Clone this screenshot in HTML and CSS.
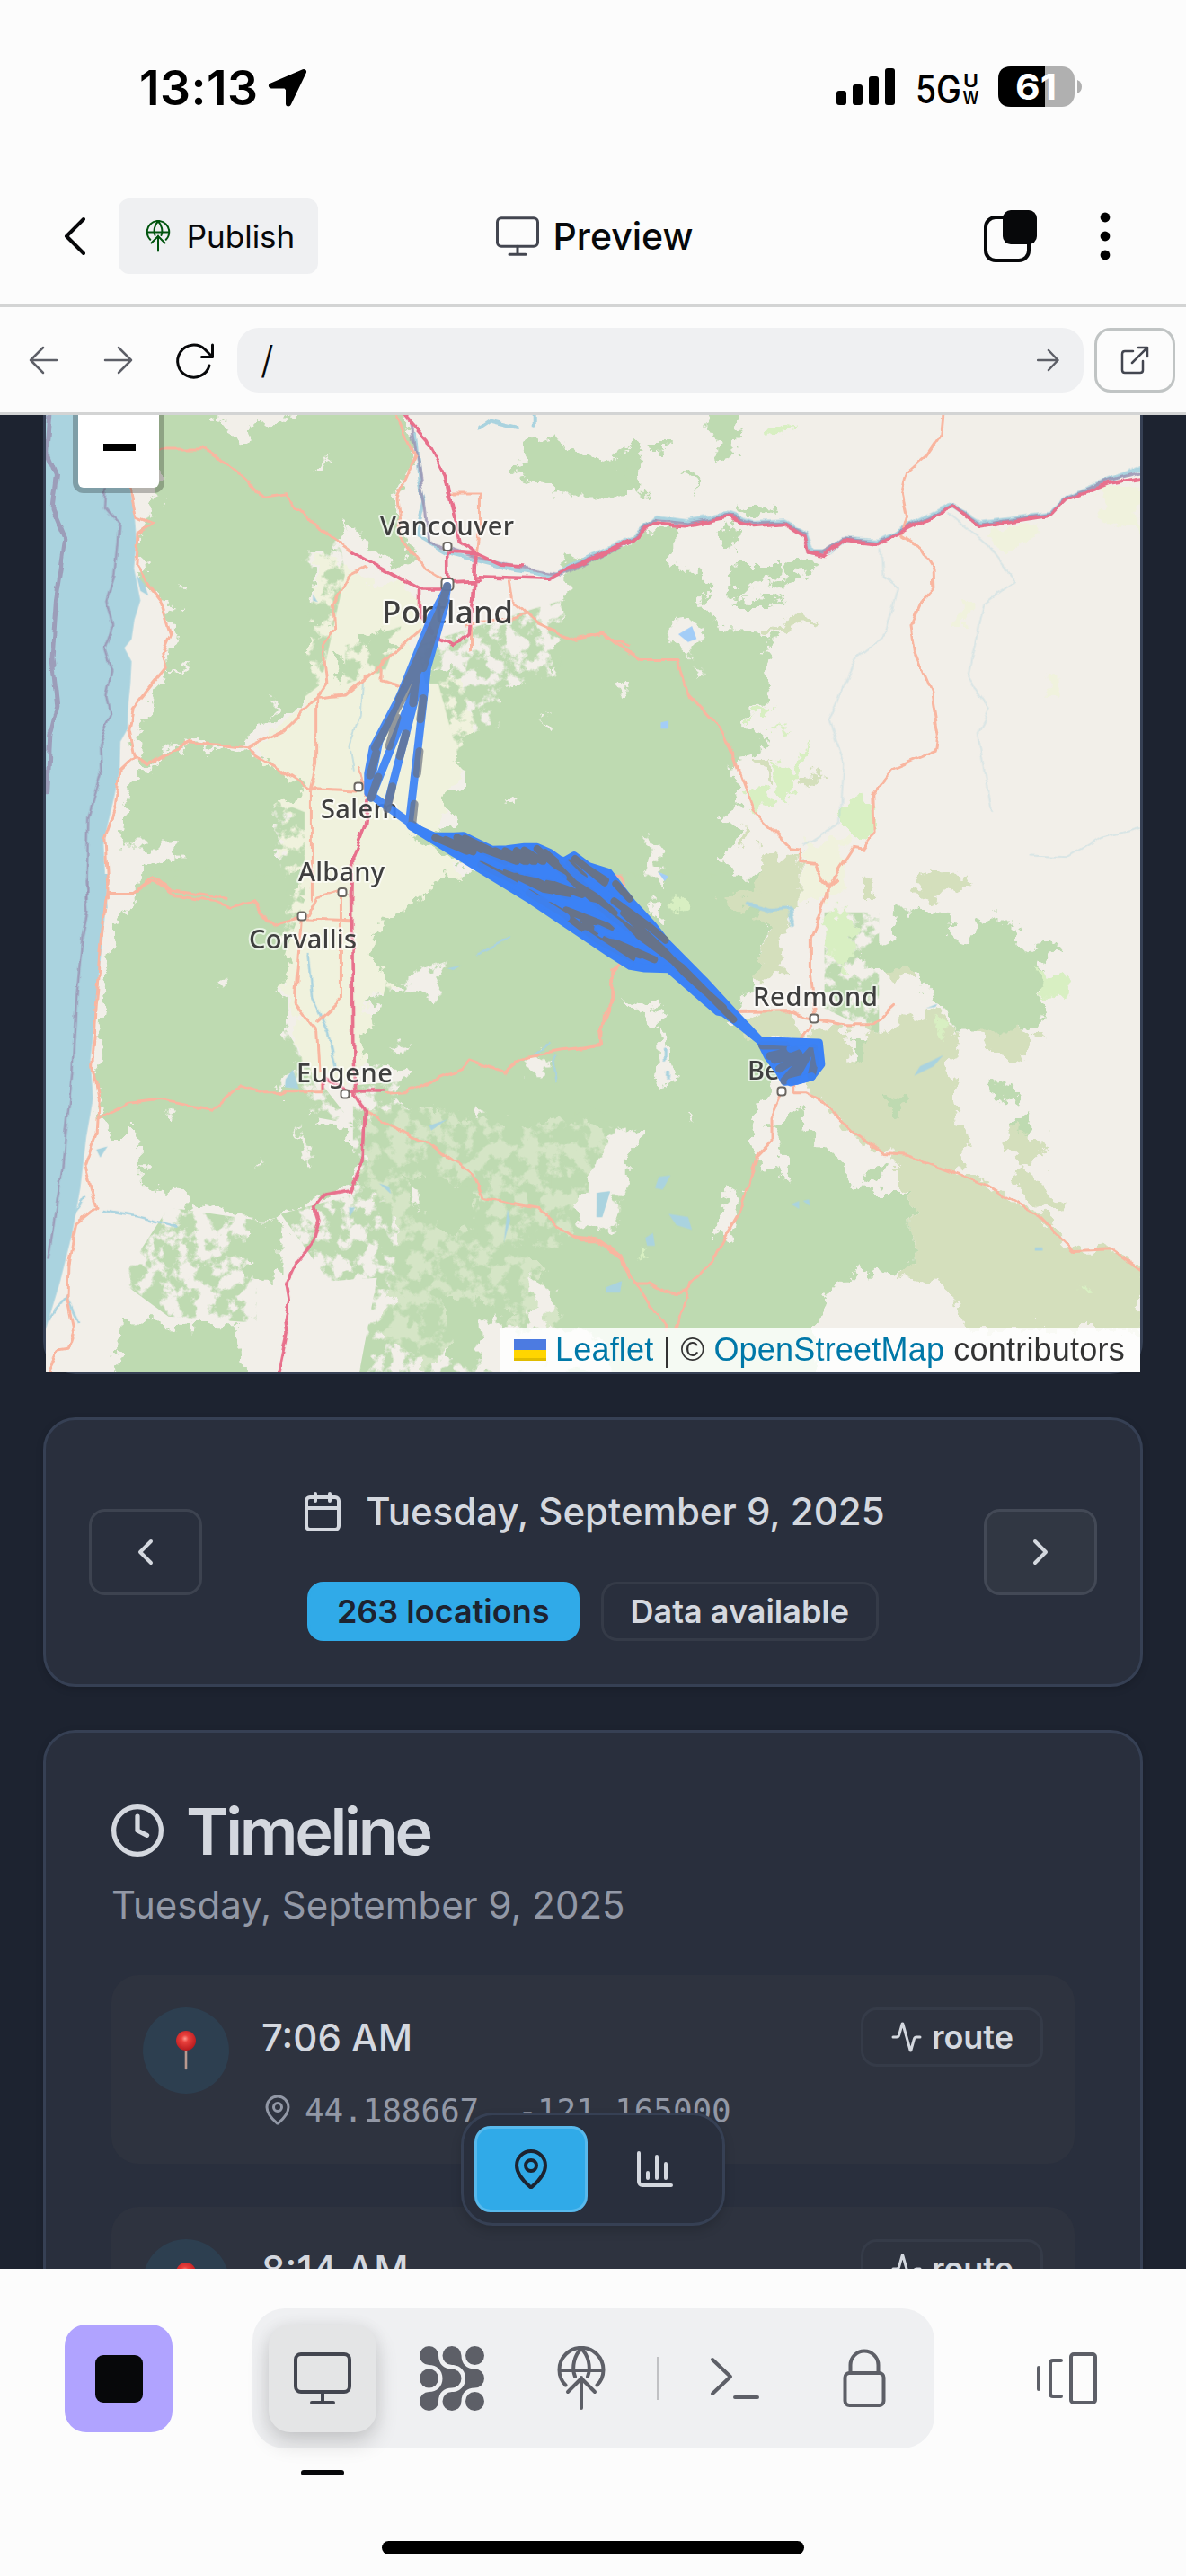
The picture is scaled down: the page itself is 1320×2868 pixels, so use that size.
FILE: index.html
```html
<!DOCTYPE html>
<html lang="en">
<head>
<meta charset="utf-8">
<title>Preview</title>
<link rel="stylesheet" href="styles.css">
</head>
<body>
<svg class="defs" width="0" height="0" aria-hidden="true">
  <symbol id="publish-globe" viewBox="0 0 72 72">
    <path d="M18.500 43.500A24.500 24.500 0 1 1 53.500 43.500M11.500 27H60.500M29 34C25 24 28 10 36 3C44 10 47 24 43 34"/>
    <path d="M36 69V35M21 51L36 36L51 51"/>
  </symbol>
  <symbol id="monitor" viewBox="0 0 72 72">
    <rect x="6" y="9" width="60" height="42" rx="6"/>
    <path d="M36 51V62M24 63H48"/>
  </symbol>
  <symbol id="map-pin" viewBox="0 0 24 24">
    <path d="M20 10c0 4.993-5.539 10.193-7.399 11.799a1 1 0 0 1-1.202 0C9.539 20.193 4 14.993 4 10a8 8 0 0 1 16 0"/>
    <circle cx="12" cy="10" r="3"/>
  </symbol>
  <symbol id="activity" viewBox="0 0 24 24">
    <path d="M22 12h-2.480a2 2 0 0 0-1.930 1.460l-2.350 8.360a.25.25 0 0 1-.48 0L9.240 2.180a.25.25 0 0 0-.48 0l-2.350 8.360A2 2 0 0 1 4.490 12H2"/>
  </symbol>
  <radialGradient id="pin-ball" cx=".45" cy=".4" r=".6">
    <stop offset="0" stop-color="#ff9a90"/><stop offset=".3" stop-color="#e9403c"/><stop offset="1" stop-color="#b81a1e"/>
  </radialGradient>
  <symbol id="pushpin" viewBox="0 0 48 48">
    <path d="M24 23V44" stroke="#b99a90" stroke-width="2.600" stroke-linecap="round"/>
    <circle cx="24" cy="13" r="11" fill="url(#pin-ball)"/>
  </symbol>
</svg>

<div class="status-bar">
  <div class="clock">
    <span>13:13</span>
    <svg width="44" height="44" viewBox="0 0 44 44"><path d="M40 4L4 19.500H20L23 23V39.500Z" stroke="#000" stroke-width="6" stroke-linejoin="round"/></svg>
  </div>
  <svg class="status-icons" width="280" height="50" viewBox="928 71 280 50">
    <rect x="931" y="101" width="11" height="16" rx="3"/><rect x="949" y="94" width="11" height="23" rx="3"/><rect x="967" y="85" width="11" height="32" rx="3"/><rect x="985" y="76" width="11" height="41" rx="3"/>
    <text x="1019" y="115" font-size="44" font-weight="500" textLength="51" lengthAdjust="spacingAndGlyphs">5G</text>
    <text x="1072" y="97" font-size="20" font-weight="600" textLength="17" lengthAdjust="spacingAndGlyphs">U</text>
    <text x="1071.500" y="116" font-size="20" font-weight="600" textLength="18" lengthAdjust="spacingAndGlyphs">W</text>
    <rect x="1111" y="74" width="85" height="45" rx="14" fill="#b0b0b0"/>
    <path d="M1163 74H1125Q1111 74 1111 88V105Q1111 119 1125 119H1163Z"/>
    <path d="M1199 89Q1204 91 1204 96.500Q1204 102 1199 104Z" fill="#b0b0b0"/>
    <text x="1130" y="111" font-size="40" font-weight="700" fill="#fff" textLength="46" lengthAdjust="spacingAndGlyphs">61</text>
  </svg>
</div>

<header class="top-bar">
  <div class="top-left">
    <svg class="line back" width="28" height="46" viewBox="0 0 28 46"><path d="M23 4L4 23L23 42"/></svg>
    <button class="publish"><svg class="line" width="36" height="36"><use href="#publish-globe"/></svg><span>Publish</span></button>
  </div>
  <div class="top-title"><svg class="line" width="54" height="54"><use href="#monitor"/></svg><span>Preview</span></div>
  <div class="top-right">
    <svg width="62" height="62" viewBox="0 0 62 62"><rect x="4" y="10" width="48" height="48" rx="11" fill="none" stroke="#07080a" stroke-width="4"/><rect x="23" y="2" width="38" height="38" rx="9" fill="#07080a"/></svg>
    <svg width="12" height="56" viewBox="0 0 12 56"><circle cx="6" cy="7" r="5.400"/><circle cx="6" cy="28" r="5.400"/><circle cx="6" cy="49" r="5.400"/></svg>
  </div>
</header>

<nav class="address-bar">
  <svg class="line muted" width="34" height="34" viewBox="0 0 34 34"><path d="M32 17H3M17 3L3 17L17 31"/></svg>
  <svg class="line muted" width="34" height="34" viewBox="0 0 34 34"><path d="M2 17H31M17 3L31 17L17 31"/></svg>
  <svg class="line reload" width="46" height="46" viewBox="0 0 46 46"><path d="M39 29A18 18 0 1 1 34 11L42 19M42.500 6V19.500H30.500"/></svg>
  <div class="url"><span>/</span><svg class="line muted" width="26" height="26" viewBox="0 0 26 26"><path d="M1 13H23M13 2L23.500 13L13 24"/></svg></div>
  <button class="external"><svg class="line" width="34" height="34" viewBox="0 0 34 34"><path d="M15 7H6Q3 7 3 10V28Q3 31 6 31H23Q26 31 26 28V18M14 20L31 3M21 3H31V13"/></svg></button>
</nav>

<main class="app">
  <section class="map">
    <svg width="1218" height="1065" viewBox="51 462 1218 1065">
      <defs>
        <filter id="ragged" x="-5%" y="-5%" width="110%" height="110%">
          <feTurbulence type="fractalNoise" baseFrequency=".05" numOctaves="5" seed="7"/>
          <feDisplacementMap in="SourceGraphic" scale="34" xChannelSelector="R" yChannelSelector="G"/>
        </filter>
        <filter id="speckle" x="-5%" y="-5%" width="110%" height="110%">
          <feTurbulence type="fractalNoise" baseFrequency=".055" numOctaves="6" seed="4"/>
          <feColorMatrix values="0 0 0 0 0  0 0 0 0 0  0 0 0 0 0  8 0 0 0 -3.4" result="m"/>
          <feComposite in="SourceGraphic" in2="m" operator="in"/>
          <feGaussianBlur stdDeviation=".7"/>
        </filter>
        <filter id="wiggle" x="-5%" y="-5%" width="110%" height="110%">
          <feTurbulence type="fractalNoise" baseFrequency=".05" numOctaves="2" seed="12"/>
          <feDisplacementMap in="SourceGraphic" scale="9" xChannelSelector="R" yChannelSelector="G"/>
        </filter>
      </defs>
      <rect x="51" y="462" width="1218" height="1065" fill="#f2efe9"/>

      <!-- farmland -->
      <g filter="url(#ragged)" fill="#f0f2dd">
        <g transform="translate(0 440) scale(.4464 .3571)">
          <path d="M790 480L900 560L1060 640L1020 800L1150 900L1200 1060L1110 1230L1100 1330L1180 1568H720L700 1280L640 1090L760 960Z"/>
        </g>
        <g transform="translate(0 980) scale(.4464 .3571)">
          <path d="M700 0H1120L960 160L990 330L900 370L930 440L900 620H740L740 400L690 300Z"/>
        </g>
        <g transform="translate(640 440) scale(.4337 .3571)">
          <path d="M590 1390L700 1380L680 1568H580ZM1350 290L1450 280V430L1350 400ZM1060 430L1180 410L1190 440L1100 500ZM1000 630L1030 630L1010 720H970ZM1215 880H1240L1235 940H1210Z"/>
        </g>
      </g>

      <!-- open woodland -->
      <g filter="url(#ragged)" fill="#d5e5c6">
        <g transform="translate(0 980) scale(.4464 .3571)">
          <path d="M920 700L1600 720V1400H1160L1060 1532L960 1400L1000 1080L900 940Z"/>
        </g>
        <path d="M640 1180L700 1210L690 1400L640 1420Z"/>
      </g>

      <!-- forest -->
      <g filter="url(#speckle)" fill="#bedab1">
        <g transform="translate(0 980) scale(.4464 .3571)">
          <path d="M880 640L1640 560V1640H880L940 1240L820 1250L700 1040L880 980ZM420 1020L640 1060L640 1380L420 1360L300 1250ZM760 60L680 -20V400L780 600L880 760L700 720L660 400Z"/>
          <path d="M980 200L1100 100V500L920 600Z"/>
        </g>
        <g transform="translate(0 440) scale(.4464 .3571)">
          <path d="M740 400L840 380L860 560L800 900L740 960ZM1080 840L1440 660V1120H1140ZM640 1240L760 1300V1560H640ZM1040 780L1240 700L1400 640V900H1060ZM860 780L1000 720L960 860L860 900Z"/>
        </g>
        <g transform="translate(640 980) scale(.4337 .3571)"><path d="M-60 560L200 660L160 1100L240 1400L-60 1400ZM640 100H780V480L640 400Z"/></g>
      </g>
      <g filter="url(#ragged)" fill="#bedab1">
        <g transform="translate(0 440) scale(.4464 .3571)">
          <path d="M340 20H530L560 110L600 140L620 100L700 80L760 20H1000L1035 200L985 310L1010 440L1040 520L980 540L900 440L860 400L840 480L760 470L780 600L760 660L800 720L770 800L790 900L730 980L610 1060L620 1090L480 1080L360 1150L340 1060L420 860L430 740L400 640L350 560L345 440L400 330Z"/>
          <path d="M360 1160L480 1095L620 1110L760 1225L720 1250L670 1300L700 1370L700 1450L740 1540L700 1600H340L350 1480L440 1450V1396H300L310 1310L330 1210Z"/>
          <path d="M1325 130L1400 150L1500 220L1600 180V312H1372L1370 265L1290 250Z"/>
          <path d="M1600 500L1460 570L1430 680L1380 770L1390 860L1330 880L1240 940L1230 1050L1130 1060L1160 1200L1090 1260L1130 1340L1030 1380L1200 1480L1260 1600H1600Z"/>
          <path d="M900 760L960 730L1000 790L930 830ZM830 820L900 850L840 890ZM1060 840L1130 850L1100 900Z"/>
        </g>
        <g transform="translate(640 440) scale(.4337 .3571)">
          <path d="M-20 515L150 460L180 415H252V540H330V640L370 730L510 740L500 820L475 870L500 940L440 1000L485 1060L460 1140L400 1150L430 1270L370 1300L420 1370L370 1440L430 1600H-20Z"/>
          <path d="M405 535H535L520 560L440 600L395 655H490L540 630L400 620ZM340 20H420L410 190L370 205L365 140L340 130ZM-20 180L70 225L130 165L175 190L130 240L140 310H-20ZM270 250L310 260L325 300ZM190 140H230V165H200ZM370 430L410 400L420 480L380 470ZM420 340L500 350L480 385ZM580 510L640 530L590 570L500 590Z"/>
        </g>
        <g transform="translate(0 980) scale(.4464 .3571)">
          <path d="M300 110L380 -20H740L710 100L700 220L730 260L690 340L725 400L710 470L730 560L690 640L790 720L880 800L890 940L800 980L700 1060L610 1050L460 1015V985L440 960H358V840H330V795H280L250 740L242 600L250 400L265 270Z"/>
          <path d="M1110 -20H1620V800L1400 740L1230 760L980 680L1020 600L900 560L900 490L960 400L900 370L1010 340L920 250L930 170Z"/>
          <path d="M296 1365L480 1390L600 1390L610 1600H285ZM608 1060H700V1240H620Z"/>
          <path d="M1100 1300L1280 1340L1220 1500L1120 1480ZM1000 900L1180 960L1200 1120L1040 1060ZM1300 1100L1430 1160L1480 1340L1400 1360Z"/>
        </g>
        <g transform="translate(640 980) scale(.4337 .3571)">
          <path d="M-20 -20H500L470 330L400 420L490 500L520 620L480 720L540 710L620 760L680 880L760 980H860L870 1200L810 1225L720 1210L640 1300L615 1400V1600H-20V1100L100 1050L140 800L40 700L-20 740Z"/>
          <path d="M1120 750L1170 740L1160 790L1120 800ZM1060 620L1140 650L1130 690L1060 650ZM1120 1370H1190L1170 1400H1120Z"/>
        </g>
      </g>

      <!-- clearings -->
      <g filter="url(#ragged)" fill="#f2efe9">
        <g transform="translate(0 440) scale(.4464 .3571)">
          <path d="M770 230L820 200L800 250ZM400 630L455 660L420 690ZM430 845L480 850L440 860ZM680 940L690 960L680 1010ZM860 390L890 400L890 440ZM1270 1240L1300 1250L1280 1275ZM1540 900L1568 890V930ZM1350 1005L1370 1020L1365 1045ZM460 570L472 575L465 590Z"/>
        </g>
        <g transform="translate(640 440) scale(.4337 .3571)">
          <path d="M240 700L300 690L330 740L290 810L240 770ZM290 820L330 880L310 890ZM100 910L140 900L145 930ZM175 1370L210 1400L230 1540H210ZM450 600L530 580L480 620Z"/>
        </g>
        <g transform="translate(0 980) scale(.4464 .3571)">
          <path d="M1010 300L1110 270L1080 370L1020 350ZM1310 570L1370 540L1360 615L1310 610ZM1520 800L1568 780V950L1530 1000L1540 1110L1440 1080L1480 900ZM740 760L790 880L760 880ZM540 300L570 300L550 350ZM970 520L1030 510L1000 560ZM1190 1380L1240 1350L1250 1400L1440 1400L1520 1450V1532H1200ZM1330 1240L1380 1270L1360 1400L1320 1390ZM640 860L650 890L635 900ZM420 730L430 750L420 760ZM1030 960L1060 980L1030 1040ZM1180 700L1210 720L1190 750Z"/>
        </g>
        <g transform="translate(640 980) scale(.4337 .3571)">
          <path d="M110 370L240 400L200 450L240 500L260 620L220 650L210 470ZM120 790L180 770L150 830L90 1000L20 1080L0 980L60 900ZM470 700L530 600L560 700L510 760L550 940L470 880L450 820ZM390 970L430 960L400 1110H360ZM585 730L640 720L720 830L830 870V970L760 960L680 880L600 780ZM190 70L220 80L210 140L190 120ZM290 720L310 730L300 750Z"/>
        </g>
      </g>

      <!-- scrub and grass -->
      <g filter="url(#ragged)">
        <g transform="translate(640 980) scale(.4337 .3571)" fill="#d4dfbc">
          <path d="M480 -20H570L560 60L530 200L540 300H470L490 160L440 60ZM420 430L560 410L590 480L500 500L430 480Z"/>
          <path d="M600 480L690 450L700 560L760 470L830 450L930 400L980 480L960 600L980 720L1000 840L990 910L1050 950L1190 1040L1280 1150H1380L1450 1210V1400H990L980 1330L920 1260L820 1240L870 1190L860 980L830 970V870L720 820L640 700L590 630Z"/>
          <path d="M900 -20H1010L940 70L860 20ZM1020 480L1190 470L1180 530L1130 570ZM1130 780L1215 800L1190 870L1130 880L1200 930V970L1255 1010V1050L1190 1020L1120 940L1140 890L1090 830ZM780 240L860 230V320L800 300ZM960 1300L1020 1300L1010 1360Z"/>
        </g>
        <g transform="translate(640 440) scale(.4337 .3571)" fill="#d4dfbc">
          <path d="M480 1430L580 1430L580 1600H440L370 1560L480 1540ZM890 1475L960 1490L1010 1525L940 1568L900 1520ZM490 730L570 690L620 690L540 740ZM460 1140L510 1140L490 1210ZM580 1180L630 1190L590 1230ZM740 1490L780 1530L770 1568H740ZM430 1340L460 1380L430 1420Z"/>
        </g>
        <g transform="translate(640 980) scale(.4337 .3571)" fill="#bedab1">
          <path d="M830 90L960 95L965 180L1010 200L1040 130H1120L1160 230L1230 180L1250 210L1190 260L1200 330L1210 430L1120 480H980L940 380L900 330L840 270L760 280L730 220L800 180ZM800 670L850 690L840 730L800 720ZM710 500L750 490L740 570L710 560ZM770 890L810 900L780 950L740 930Z"/>
        </g>
        <g transform="translate(640 980) scale(.4337 .3571)" fill="#d8efc2">
          <path d="M640 110L700 90L730 220L700 290L650 240ZM1180 290L1270 300L1265 360L1210 365ZM250 60L290 50L300 90L260 100ZM920 440L960 440L950 490ZM1300 1270H1320V1285H1300ZM170 1140H190L180 1180Z"/>
        </g>
        <g transform="translate(640 440) scale(.4337 .3571)" fill="#d8efc2">
          <path d="M500 100L560 75L540 110L490 145ZM510 1160L560 1170L600 1070L600 1130L580 1180L540 1260L520 1230ZM440 1230L490 1220L510 1280L460 1300ZM690 1260L740 1240L770 1270L765 1360L720 1380L680 1340ZM480 970L510 980L490 1000H450ZM500 1040L560 1040L510 1055Z"/>
        </g>
      </g>

      <!-- water -->
      <g fill="#aad3df">
        <g transform="translate(0 440) scale(.4464 .3571)">
          <path d="M100 20H325V290L335 370L340 450L334 540L350 640L335 700L328 760L310 788L328 830L325 900L320 960L318 1040L300 1080L298 1170L285 1250L270 1330L258 1400L262 1500L268 1600H100Z"/>
          <path d="M340 560L360 590L370 625L350 610ZM780 620L792 645L780 640Z"/>
        </g>
        <g transform="translate(0 980) scale(.4464 .3571)">
          <path d="M100 -20H270L262 100L250 250L240 400L225 560L232 680L215 800L200 960L180 1100L150 1250L114 1400Z"/>
          <path d="M712 620L730 590L745 650L710 645ZM945 945L970 955L975 978ZM1488 975L1520 970L1500 1050H1488ZM870 1020L885 1020L872 1050ZM1265 1025L1272 1060L1256 1130ZM240 840L268 830L250 865ZM1510 1270L1550 1250L1545 1285ZM1115 275L1150 265L1130 280ZM1070 765L1115 745L1075 780Z"/>
        </g>
        <g transform="translate(640 980) scale(.4337 .3571)">
          <path d="M60 975L90 970L70 1050H55ZM240 1040L290 1050L300 1090L260 1075ZM215 925L245 920L225 965L205 960ZM180 1115L200 1100L205 1140H185ZM80 1270L120 1250L115 1285H80ZM555 1010L575 1000V1025ZM585 1000L600 995L602 1015ZM900 400L930 385L925 395ZM1180 1145H1200V1155H1180ZM885 580L945 545L920 580L870 610Z"/>
        </g>
        <g transform="translate(640 440) scale(.4337 .3571)"><path d="M220 1020L240 1015V1040H220ZM265 745L300 720L312 760L290 770ZM212 1485L240 1500L230 1515Z" fill="#a3cdf7"/></g>
      </g>
      <g class="lines river" filter="url(#wiggle)">
        <path transform="translate(0 440) scale(.4464 .3571)" d="M1190 105L1220 80L1290 100M1330 60V100M1035 120L1045 260L1060 330L1040 440L1110 490L1200 520L1280 545L1380 565L1440 520L1568 455" stroke-width="4"/>
        <path transform="translate(0 440) scale(.4464 .3571)" d="M905 890L900 1000L870 1100L880 1170" stroke-width="2" opacity=".6"/>
        <path transform="translate(640 440) scale(.4337 .3571)" d="M0 525L150 445L210 380L290 395L390 370L460 400L540 395L590 430L610 490L650 490L690 450L780 455L850 410L960 340L1040 400L1220 370L1260 320L1370 265L1450 225" stroke-width="5"/>
        <path transform="translate(640 440) scale(.4337 .3571)" d="M785 480L790 570L830 600L800 740L720 820L650 1020L690 1150L680 1330L590 1400M960 370L1060 470L1130 580L1050 650L1010 880L1065 980L1035 1050L1070 1300M1450 1350L1350 1380L1270 1440L1170 1435" stroke-width="2" opacity=".35"/>
        <path transform="translate(0 980) scale(.4464 .3571)" d="M770 230L780 370L820 480L840 590M250 1030L350 1050L440 1080M120 1370L165 1300L195 1380M180 1050L215 990M1190 230L1270 180M1330 540L1370 510M1380 550L1388 630" stroke-width="2.500"/>
        <path transform="translate(640 980) scale(.4337 .3571)" d="M440 75L500 95L550 90L560 140M230 530V560M240 600V615" stroke-width="4"/>
      </g>
      <g class="lines boundary" filter="url(#wiggle)">
        <path transform="translate(0 440) scale(.4464 .3571)" d="M125 62L118 180L140 250L130 350L163 450L140 640L130 820L143 970L125 1060L118 1240" stroke-width="5"/>
        <path transform="translate(0 440) scale(.4464 .3571)" d="M265 290L262 350L297 400L285 560L265 640L280 720L260 790L278 860L265 940L275 1000L247 1090L250 1180L220 1320L215 1568" stroke-width="2.500"/>
        <path transform="translate(0 980) scale(.4464 .3571)" d="M212 0L218 100L205 180L190 380L180 600L155 900L120 1180" stroke-width="2.500"/>
        <path transform="translate(640 440) scale(.4337 .3571)" d="M0 528L150 448L200 390L290 400L390 375L460 400L540 398L590 430L600 490L640 490L690 448L780 458L850 412L970 344L1040 404L1220 370L1260 320L1370 265L1450 240" stroke-width="3"/>
        <path transform="translate(0 440) scale(.4464 .3571)" d="M1025 80L1040 200L1062 350L1070 460L1200 510L1300 540L1400 560L1568 460" stroke-width="3"/>
      </g>

      <!-- roads -->
      <g class="lines road" filter="url(#wiggle)">
        <path transform="translate(0 440) scale(.4464 .3571)" d="M400 168H510L560 210L660 320L710 310L790 410L880 490M990 62L1035 190L990 320L1000 440L1060 540L1100 570M325 290L340 380L380 400L345 430L340 530L375 600L400 640L425 740L405 800L415 850L330 980L320 1040L335 1130L300 1170L290 1280L262 1380L270 1568M335 1130L365 1155L470 1080L615 1100L710 1045L790 945L860 935L950 840L1050 730M910 535L870 560L830 650L835 730L805 780L815 900L790 945V1150L776 1225V1568M615 1100L770 1225L890 1232M950 840V890L1010 910M1120 308H1195V440L1190 500M1272 570L1280 640L1340 710L1430 760L1500 745L1568 780M1175 700V795M1160 720L1310 685M910 1250L895 1160M270 1550H330L385 1500L430 1545L560 1568"/>
        <path transform="translate(640 440) scale(.4337 .3571)" d="M0 762L70 745L170 825H260L290 930L380 1050L410 1140L460 1300L550 1410L580 1415L578 1455L615 1460L648 1535V1568M945 62L940 120L900 190L852 240L838 310L850 380L836 440L890 480L920 540L922 600L887 645L860 720L870 800L915 930L932 1060L925 1110L815 1165L765 1240L768 1370L740 1415L715 1410L648 1535M90 1490L115 1495L135 1560"/>
        <path transform="translate(0 980) scale(.4464 .3571)" d="M270 0L255 160L240 400L230 580L245 680L240 790L212 890L240 1020L190 1070L170 1200L168 1310L185 1410L170 1465L145 1470L120 1532M270 40H330L385 0L440 50L530 65L570 85L630 65L680 140L750 120L875 125M752 110L735 380L790 470L795 590M850 40V370L790 440M850 30L790 50L765 110M242 745L320 695L400 685L530 715L560 680L600 638L650 660H805V620M960 665L1010 660L1150 590L1170 560L1260 600L1310 550L1380 535L1500 515L1495 470L1525 380V280L1550 255M910 720L1040 810L1070 815L1190 930L1205 990L1340 1020L1390 1080L1450 1125L1490 1125L1550 1180L1568 1240"/>
        <path transform="translate(640 980) scale(.4337 .3571)" d="M635 0L648 30L620 130L605 180V290L615 420M648 25L670 0M610 450L580 500M400 410L550 408L590 430L690 450H765L820 390M530 670L505 740V810L465 860L430 1020L350 1190L295 1260L260 1400M562 640V660H590L640 690L720 790L790 850L850 855L1050 945L1190 1045L1280 1155L1380 1150L1450 1210M-5 1110L60 1120L120 1170L155 1260H190L230 1283H290M155 1260L235 1400M115 260L95 290L98 380L70 420L65 520L0 528"/>
      </g>
      <g class="lines motorway" filter="url(#wiggle)">
        <path transform="translate(0 440) scale(.4464 .3571)" d="M1010 62L1065 140L1110 250L1125 340L1145 460L1185 490L1180 640L1170 740L1135 780L1090 755M1115 490V580M1115 490L1190 495L1250 530L1300 535M1190 565L1370 572L1420 540L1568 455M880 490L1045 605H1100L1115 580L1190 575M1045 605V690L1080 740M920 1250L910 1340L880 1440L877 1568"/>
        <path transform="translate(640 440) scale(.4337 .3571)" d="M0 535L150 452L200 400L280 408L390 380L460 410L540 402L590 440L600 490L640 500L690 452L780 462L850 418L970 348L1040 408L1220 375L1260 325L1370 275L1450 258"/>
        <path transform="translate(0 980) scale(.4464 .3571)" d="M877 0L880 540L885 670L910 720L905 870L875 965L810 980L785 1020L795 1060L780 1130L740 1190L715 1260L722 1310L710 1370L715 1410L695 1532M808 650V620L870 655H955"/>
      </g>

      <!-- towns -->
      <g class="town">
        <rect x="493.500" y="604" width="9" height="9" rx="3"/><rect x="491.500" y="644" width="13" height="13" rx="3.500"/><rect x="394.500" y="871.500" width="9" height="9" rx="3"/><rect x="376.500" y="989" width="9" height="9" rx="3"/><rect x="331.500" y="1015.500" width="9" height="9" rx="3"/><rect x="379.500" y="1213.500" width="9" height="9" rx="3"/><rect x="901.500" y="1129.500" width="9" height="9" rx="3"/><rect x="865.500" y="1210.500" width="9" height="9" rx="3"/>
      </g>
      <g class="label">
        <text x="423" y="596" textLength="149">Vancouver</text>
        <text class="city" x="425" y="694" textLength="146">Portland</text>
        <text x="357" y="911" textLength="86">Salem</text>
        <text x="332" y="981" textLength="96">Albany</text>
        <text x="277" y="1056" textLength="120">Corvallis</text>
        <text x="330" y="1205" textLength="107">Eugene</text>
        <text x="838" y="1120" textLength="139">Redmond</text>
        <text x="832" y="1202" textLength="72">Bend</text>
      </g>

      <!-- recorded route -->
      <g class="route">
        <g transform="translate(0 440) scale(.4464 .3571)">
          <path class="track" d="M1115 595L1108 660L1065 850L1020 1335M1115 600L1040 920L965 1280M1112 640L1020 960L925 1255M1115 600L1090 660L1060 790L930 1100L918 1180V1240L1080 1385M1080 680L1000 930L945 1080L920 1230M1075 690L1050 830"/>
          <path class="dash" d="M1115 595L1055 850M1108 640L995 950M1050 840L935 1100M1055 945L1048 1010M1046 1110L1040 1180M1033 1275L1027 1345M1030 960L1038 870M970 1095L990 1005M997 1125L1012 1055M965 1290L978 1220M925 1255L943 1190M923 1185L938 1115"/>
        </g>
        <g transform="translate(380 880) scale(.3571 .3333)">
          <path class="track solid" d="M215 118L290 154L350 154L380 152L470 199L515 197L570 190L610 190L650 209L690 240L725 218L770 254L833 275L905 375L970 450L1010 505L1130 635L1220 740L1305 836L1225 768L1190 742L1172 738L1020 596L945 594L900 586L840 546L590 366L430 261Z"/>
          <path class="track solid" d="M1305 836L1488 843L1495 915L1465 956L1420 970L1382 973L1365 940L1330 890Z"/>
          <path class="dash dense" d="M292 158L390 203M325 165L410 205M360 157L510 238M385 160L530 235M480 202L545 238M510 202L575 240M545 202L600 240M570 200L628 238M435 248L540 302M515 268L650 340M580 290L705 353M645 308L750 348M610 195L720 300L830 410L960 510L1060 590L1222 765M635 208L740 305L850 410M710 242L755 288M728 228L820 308M768 262L823 300M855 312L898 362M585 342L690 410L800 500L905 560M700 400L840 458M750 425L790 475M825 495L975 565M860 525L930 550M850 370L960 455L1010 500M880 410L1000 530L1070 610L1190 725"/>
          <path class="track" d="M440 222L540 262L640 262L690 292M560 268L660 290M630 355L720 372L790 388L860 445L905 495M720 380L820 410L880 470M800 462L840 482L900 492M690 235L740 290L830 350M775 400L700 372M400 235L560 330L700 425M760 480L900 580"/>
          <path class="dash" d="M1312 852H1385M1335 887L1415 868M1350 900L1425 880M1365 930L1425 890M1380 970L1472 860M1410 968L1450 890M1465 955L1480 880"/>
          <path class="track" d="M1310 836L1480 846M1440 845L1400 862M1400 975L1466 956M1482 850L1492 915"/>
        </g>
      </g>
    </svg>
    <div class="zoom-control"><i></i></div>
    <div class="attribution">
      <svg width="36" height="24" viewBox="0 0 12 8"><path fill="#4c7be1" d="M0 0h12v4H0z"/><path fill="#ffd500" d="M0 4h12v3H0z"/><path fill="#e0bc00" d="M0 7h12v1H0z"/></svg>
      <span class="credit"><a>Leaflet</a> | © <a>OpenStreetMap</a> contributors</span>
    </div>
  </section>

  <section class="card day-picker">
    <button class="step"><svg class="line" width="48" height="48" viewBox="0 0 24 24"><path d="m15 18-6-6 6-6"/></svg></button>
    <div class="day">
      <div class="day-name">
        <svg class="line" width="48" height="48" viewBox="0 0 24 24"><path d="M8 2v4M16 2v4M3 10h18"/><rect x="3" y="4" width="18" height="18" rx="2"/></svg>
        <span>Tuesday, September 9, 2025</span>
      </div>
      <div class="badges"><span class="badge solid">263 locations</span><span class="badge">Data available</span></div>
    </div>
    <button class="step lit"><svg class="line" width="48" height="48" viewBox="0 0 24 24"><path d="m9 18 6-6-6-6"/></svg></button>
  </section>

  <section class="card timeline">
    <h2><svg class="line" width="58" height="58" viewBox="1 1 22 22"><circle cx="12" cy="12" r="10"/><path d="M12 6v6l4 2"/></svg><span>Timeline</span></h2>
    <p class="subtitle">Tuesday, September 9, 2025</p>
    <article class="entry">
      <div class="avatar"><svg width="48" height="48"><use href="#pushpin"/></svg></div>
      <div class="entry-body">
        <div class="entry-head"><span class="time">7:06 AM</span><span class="badge route-badge"><svg class="line" width="36" height="36"><use href="#activity"/></svg>route</span></div>
        <div class="coords"><svg class="line" width="36" height="36"><use href="#map-pin"/></svg><span>44.188667, -121.165000</span></div>
      </div>
    </article>
    <article class="entry">
      <div class="avatar"><svg width="48" height="48"><use href="#pushpin"/></svg></div>
      <div class="entry-body">
        <div class="entry-head"><span class="time">8:14 AM</span><span class="badge route-badge"><svg class="line" width="36" height="36"><use href="#activity"/></svg>route</span></div>
      </div>
    </article>
  </section>

  <div class="view-switch">
    <button class="view active"><svg class="line" width="48" height="48"><use href="#map-pin"/></svg></button>
    <button class="view"><svg class="line" width="48" height="48" viewBox="0 0 24 24"><path d="M3 3v16a2 2 0 0 0 2 2h16M18 17V9M13 17V5M8 17v-3"/></svg></button>
  </div>
</main>

<footer class="bottom-bar">
  <div class="tools">
    <button class="stop"><i></i></button>
    <div class="dock">
      <button class="tool active"><svg class="line" width="72" height="72"><use href="#monitor"/></svg></button>
      <button class="tool"><svg width="72" height="72" viewBox="0 0 72 72" fill="#5d5f67">
        <circle cx="10.500" cy="36" r="10.500"/><circle cx="61.500" cy="10.500" r="10.500"/><circle cx="61.500" cy="61.500" r="10.500"/>
        <path d="M10.500 0A10.500 10.500 0 0 1 21 10.500C21 20 27 25.500 36 25.500A10.500 10.500 0 0 1 36 46.500C27 46.500 21 52 21 61.500A10.500 10.500 0 1 1 10.500 51C19 51 25.500 45 25.500 36S19 21 10.500 21A10.500 10.500 0 0 1 10.500 0Z"/>
        <path d="M36 0A10.500 10.500 0 0 1 46.500 10.500C46.500 20 52.500 25.500 61.500 25.500A10.500 10.500 0 0 1 61.500 46.500C52.500 46.500 46.500 52 46.500 61.500A10.500 10.500 0 1 1 36 51C44.500 51 51 45 51 36S44.500 21 36 21A10.500 10.500 0 0 1 36 0Z"/>
      </svg></button>
      <button class="tool"><svg class="line" width="72" height="72"><use href="#publish-globe"/></svg></button>
      <i class="divider"></i>
      <button class="tool"><svg class="line" width="72" height="72" viewBox="0 0 72 72"><path d="M11 15L31 34L11 53M36 57H61"/></svg></button>
      <button class="tool"><svg class="line" width="72" height="72" viewBox="0 0 72 72"><rect x="14.500" y="30" width="43" height="36" rx="5"/><path d="M20.500 30V21A15.500 15.500 0 0 1 51.500 21V30"/></svg></button>
    </div>
    <svg class="line panes" width="72" height="72" viewBox="0 0 72 72"><rect x="41" y="9" width="27" height="54" rx="3"/><path d="M30 16H21Q18 16 18 19V53Q18 56 21 56H30M5 24V48"/></svg>
  </div>
  <i class="tool-marker"></i>
  <i class="home-indicator"></i>
</footer>
</body>
</html>
```
FILE: styles.css
```css
* { box-sizing: border-box; }
body {
  margin: 0;
  width: 1320px;
  height: 2868px;
  overflow: hidden;
  display: flex;
  flex-direction: column;
  background: #fcfcfc;
  color: #07080a;
  font-family: Inter, "Liberation Sans", sans-serif;
}
button { padding: 0; border: 0; background: none; color: inherit; font: inherit; display: flex; align-items: center; justify-content: center; }
svg { flex: none; display: block; }
.defs { position: absolute; }
.line { fill: none; stroke: currentColor; stroke-width: 2; stroke-linecap: round; stroke-linejoin: round; }

/* phone status bar */
.status-bar { height: 187px; padding: 71px 112px 0 155px; display: flex; justify-content: space-between; align-items: flex-start; color: #000; }
.clock { display: flex; align-items: center; gap: 11px; height: 53px; font-size: 53.500px; font-weight: 600; letter-spacing: .4px; }

/* title bar */
.top-bar { height: 155px; flex: none; border-bottom: 3px solid #d3d4d4; padding: 0 84px 0 70px; display: grid; grid-template-columns: 1fr auto 1fr; align-items: center; }
.top-left { display: flex; align-items: center; gap: 34px; }
.back { stroke-width: 4; }
.publish { width: 222px; height: 84px; border-radius: 12px; background: #eff0f2; gap: 14px; font-size: 35px; }
.publish .line { color: #00540e; stroke-width: 4; }
.top-title { display: flex; align-items: center; gap: 13px; margin-left: 14px; font-size: 41px; font-weight: 500; }
.top-title .line { color: #434650; stroke-width: 4; }
.top-right { display: flex; align-items: center; justify-content: flex-end; gap: 69px; }

/* address bar */
.address-bar { height: 120px; flex: none; border-bottom: 3px solid #d3d4d4; padding: 0 12px 0 31px; display: flex; align-items: center; }
.address-bar .line { stroke-width: 2.500; }
.muted { color: #5d5f67; margin-right: 50px; }
.address-bar .reload { stroke-width: 3; margin: 0 24px 0 -5px; }
.url { flex: 1; height: 72px; border-radius: 24px; background: #eff0f2; padding: 0 26px 0 26px; display: flex; align-items: center; justify-content: space-between; font-size: 42px; font-weight: 300; }
.url .muted { margin: 0; }
.external { width: 90px; height: 72px; margin-left: 12px; border: 3px solid #c0c4c4; border-radius: 18px; color: #434650; }

/* previewed app */
.app { position: relative; height: 2064px; flex: none; overflow: hidden; padding: 0 48px; background: #1d2330; color: #d4d8df; }
.map { position: relative; width: 1224px; height: 1068px; border: 3px solid #364054; border-top: 0; border-radius: 0 0 36px 36px; background: #292f3d; }
.zoom-control { position: absolute; left: 30px; top: 0; width: 102px; height: 87px; border: 6px solid rgba(0, 0, 0, .25); border-top: 0; border-radius: 0 0 12px 12px; background: #fff; background-clip: padding-box; }
.zoom-control i { display: block; width: 36px; height: 8px; margin: 32px auto 0 28px; background: #000; }
.attribution { position: absolute; right: 0; bottom: 0; height: 48px; width: 712px; padding: 0 15px; display: flex; align-items: center; gap: 10px; background: rgba(255, 255, 255, .85); color: #333; font: 36px/48px "Liberation Sans", sans-serif; white-space: nowrap; }
.attribution a { color: #0078a8; }
.credit { letter-spacing: .2px; }
.lines path { fill: none; vector-effect: non-scaling-stroke; stroke-linejoin: round; stroke-linecap: round; }
.river path { stroke: #aad3df; }
.boundary path { stroke: #9a93b3; opacity: .85; }
.road path { stroke: #f9b6a0; stroke-width: 3; }
.motorway path { stroke: #e8708c; stroke-width: 3.600; }
.town rect { fill: #fff; stroke: #6b6762; stroke-width: 2; }
.label text { font-family: "Noto Sans", sans-serif; font-size: 29px; font-weight: 500; fill: #3f3f3f; stroke: rgba(255, 255, 255, .65); stroke-width: 4px; stroke-linejoin: round; paint-order: stroke; }
.label .city { font-size: 35px; }
.route path { fill: none; stroke-width: 9; stroke-linecap: round; stroke-linejoin: round; vector-effect: non-scaling-stroke; }
.route .track { stroke: #3b82f6; opacity: .92; }
.route .track.solid { fill: #3b82f6; opacity: 1; }
.route .dash { stroke: #6b7280; opacity: .7; }
.route .dash.dense { stroke-width: 8; opacity: .92; }

.card { border: 3px solid #364054; border-radius: 36px; background: #292f3d; box-shadow: 0 3px 9px rgba(0, 0, 0, .15); margin-top: 48px; }
.day-picker { height: 300px; padding: 0 48px; display: flex; align-items: center; justify-content: space-between; }
.step { width: 126px; height: 96px; border: 3px solid #3d4350; border-radius: 18px; }
.step.lit { background: #313743; border-color: #434956; }
.day { display: flex; flex-direction: column; align-items: center; gap: 51px; padding-top: 26px; }
.day-name { display: flex; align-items: center; gap: 24px; font-size: 42px; font-weight: 500; height: 54px; white-space: nowrap; }
.badges { display: flex; gap: 24px; }
.badge { height: 66px; padding: 0 30px; border: 3px solid #353b48; border-radius: 18px; display: flex; align-items: center; font-size: 36px; font-weight: 600; white-space: nowrap; }
.badge.solid { background: #30aae8; border-color: #30aae8; color: #1d2330; }

.timeline { height: 700px; padding: 73px; }
.timeline h2 { margin: 0; display: flex; align-items: center; gap: 25px; height: 72px; font-size: 72px; font-weight: 600; letter-spacing: -3.300px; }
.subtitle { margin: 20px 0 0; height: 54px; line-height: 54px; font-size: 42px; color: #9298a6; white-space: nowrap; }
.entry { height: 210px; margin-top: 48px; padding: 36px 35px; border-radius: 30px; background: #2e333f; display: flex; gap: 36px; }
.subtitle + .entry { margin-top: 51px; }
.avatar { width: 96px; height: 96px; flex: none; border-radius: 50%; background: #2d3f50; display: flex; align-items: center; justify-content: center; }
.entry-body { flex: 1; }
.entry-head { display: flex; justify-content: space-between; align-items: center; height: 66px; }
.time { font-size: 42px; font-weight: 500; }
.route-badge { gap: 10px; }
.coords { display: flex; align-items: center; gap: 12px; height: 48px; margin-top: 24px; color: #9298a6; font: 36px "DejaVu Sans Mono", "Liberation Mono", monospace; white-space: nowrap; }
.coords span { letter-spacing: -.1px; }

.view-switch { position: absolute; left: 513px; top: 1890px; width: 294px; height: 126px; padding: 12px; display: flex; gap: 12px; border: 3px solid #364054; border-radius: 36px; background: #292f3d; box-shadow: 0 6px 12px rgba(0, 0, 0, .15); }
.view { width: 126px; height: 96px; border-radius: 18px; }
.view.active { background: #30aae8; border: 3px solid #58b9ec; color: #1d2330; }

/* workspace bar */
.bottom-bar { flex: 1; display: flex; flex-direction: column; }
.tools { padding: 44px 84px 0 72px; display: flex; align-items: center; }
.stop { width: 120px; height: 120px; border-radius: 24px; background: #b0a3ff; }
.stop i { width: 53px; height: 53px; border-radius: 9px; background: #07080a; }
.dock { width: 759px; height: 156px; margin: 0 111px 0 89px; padding: 0 18px; border-radius: 36px; background: #eff0f2; display: flex; align-items: center; gap: 24px; }
.tool { width: 120px; height: 120px; border-radius: 24px; color: #5d5f67; }
.tool .line, .panes { stroke-width: 4; }
.tool.active { background: #e4e5e6; color: #434650; box-shadow: 0 12px 24px rgba(0, 0, 0, .16), 0 0 18px rgba(0, 0, 0, .05); }
.divider { width: 3px; height: 48px; background: #c0c1c4; }
.panes { color: #5d5f67; }
.tool-marker { width: 48px; height: 6px; border-radius: 3px; margin: 24px 0 0 335px; background: #07080a; }
.home-indicator { width: 470px; height: 15px; border-radius: 8px; margin: 73px auto 0; background: #000; }
```
